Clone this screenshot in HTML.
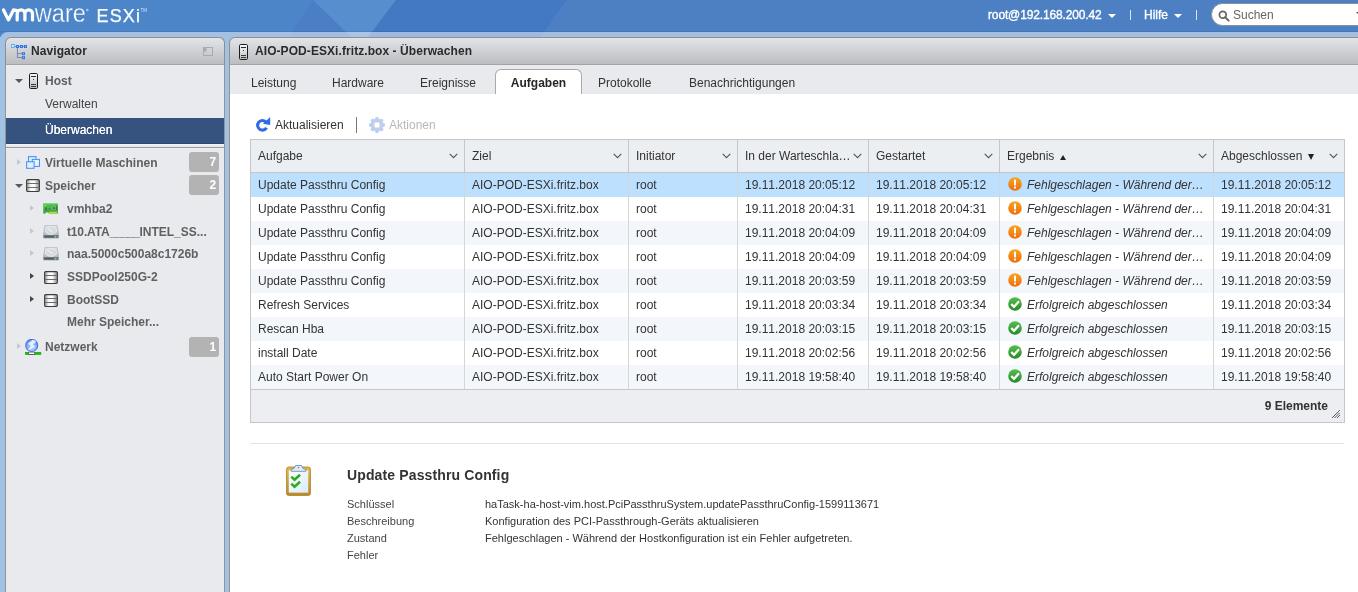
<!DOCTYPE html>
<html><head><meta charset="utf-8">
<style>
*{box-sizing:border-box;margin:0;padding:0}
html,body{width:1358px;height:592px;overflow:hidden}
body{font-family:"Liberation Sans",sans-serif;font-size:12px;color:#333;background:#4a81c4;position:relative}
.a{position:absolute;white-space:nowrap}
svg{position:absolute;overflow:visible}
#band{left:0;top:32px;width:1400px;height:20px;background:rgba(255,255,255,0.49);border-top-left-radius:8px}
.hl{color:#fff;font-size:12px;top:8px;line-height:14px;-webkit-text-stroke:0.35px #fff}
.caret{position:absolute;width:0;height:0;border-left:4px solid transparent;border-right:4px solid transparent;border-top:4px solid #fff}
#search{left:1211px;top:3px;width:170px;height:23px;background:#fff;border:1px solid #8a8f99;border-radius:11.5px}
.ph{letter-spacing:0.070px;height:28px;background:linear-gradient(#e3e4e8,#bcbdc1);border:1px solid #8f8f8f;border-bottom-color:#a3a3a3;font-weight:bold;font-size:12px;color:#2b2b2b;line-height:26px}
#navbody{left:5px;top:65px;width:220px;height:540px;background:#e9eaee;border-left:1px solid #939393;border-right:1px solid #939393}
#mainbody{left:229px;top:65px;width:1140px;height:540px;background:#fff;border-left:1px solid #939393}
.nv{font-size:12px;color:#606060;font-weight:bold;line-height:14px}
.nr{font-size:12px;color:#444;line-height:14px}
.badge{position:absolute;left:189px;width:30px;height:20px;background:#b3b3b3;border-radius:3px;color:#fff;font-weight:bold;font-size:12px;text-align:right;padding-right:2.800px;line-height:21px}
.tr{position:absolute;width:0;height:0;border-top:3.5px solid transparent;border-bottom:3.5px solid transparent;border-left:4px solid #c8c8cc}
.tr.dk{border-left-color:#444;border-top-width:3.800px;border-bottom-width:3.800px;border-left-width:4.300px;margin-top:-0.300px}
.td{position:absolute;width:0;height:0;border-left:4px solid transparent;border-right:4px solid transparent;border-top:4.300px solid #585858}
#tabs{left:230px;top:65px;width:1140px;height:29px;background:#e9eaee}
.tab{position:absolute;top:76px;font-size:12px;color:#333;white-space:nowrap;line-height:14px}
#acttab{left:495px;top:69px;width:87px;height:25px;background:#fff;border:1px solid #a9a9a9;border-bottom:none;border-radius:6px 6px 0 0;text-align:center;font-weight:bold;line-height:26px;color:#262626}
#grid{left:250px;top:139px;width:1095px;height:284px;border:1px solid #c6c6c6;background:#fff}
.gh{position:absolute;top:0;height:33px;background:#eceff2;border-right:1px solid #c6c6c6;border-bottom:1px solid #c6c6c6;line-height:33px;padding-left:7px;font-size:12px;color:#333;white-space:nowrap}
.gh svg{right:6px;top:13px}
.up{display:inline-block;width:0;height:0;margin-left:5.5px;border-left:3.5px solid transparent;border-right:3.5px solid transparent;border-bottom:5.5px solid #222}
.dn{display:inline-block;width:0;height:0;margin-left:5.5px;border-left:3.5px solid transparent;border-right:3.5px solid transparent;border-top:6px solid #222}
.c3,.c4,.c6{font-kerning:none}
.row{position:absolute;left:0;width:1093px;height:24px;line-height:24px;font-size:12px;color:#333;white-space:nowrap}
.row.alt{background:#f3f6fb}
.row.sel{background:#bde0ff}
.c{position:absolute;top:0;height:24px;border-right:1px solid #d6d6d6;padding-left:7px;overflow:hidden}
.c0{left:0;width:214px}.c1{left:214px;width:164px}.c2{left:378px;width:109px}.c3{left:487px;width:131px}.c4{left:618px;width:131px}.c5{left:749px;width:214px}.c6{left:963px;width:130px;border-right:none}
.c5 i{position:absolute;left:27px}
.c5 svg{left:8px;top:4px}
#gfoot{left:0;top:249px;width:1093px;height:33px;background:#eceef1;border-top:1px solid #c6c6c6;font-weight:bold;font-size:12px;color:#333;text-align:right;padding-right:16px;line-height:32px}
#divider{left:250px;top:443px;width:1094px;height:1px;background:#e4e4e4}
.dl{left:347px;font-size:11px;color:#444;line-height:13px}
.dv{left:485px;font-size:11px;color:#333;line-height:13px}
</style></head><body>
<div id="wrap" style="position:absolute;left:0;top:0;width:1358px;height:592px;will-change:transform">
<svg width="0" height="0" style="position:absolute">
<defs>
<linearGradient id="gHost" x1="0" y1="0" x2="0" y2="1"><stop offset="0" stop-color="#fafafa"/><stop offset="1" stop-color="#bdbdbd"/></linearGradient>
<linearGradient id="gSil" x1="0" y1="0" x2="1" y2="0"><stop offset="0" stop-color="#8e8e8e"/><stop offset="0.300" stop-color="#f4f4f4"/><stop offset="0.600" stop-color="#ffffff"/><stop offset="1" stop-color="#808080"/></linearGradient>
<linearGradient id="gWarn" x1="0" y1="0" x2="0" y2="1"><stop offset="0" stop-color="#f8a51d"/><stop offset="1" stop-color="#ee6d0e"/></linearGradient>
<linearGradient id="gOk" x1="0" y1="0" x2="0" y2="1"><stop offset="0" stop-color="#57bf4c"/><stop offset="1" stop-color="#278a27"/></linearGradient>
<linearGradient id="gGlobe" x1="0" y1="0" x2="0" y2="1"><stop offset="0" stop-color="#6f95f0"/><stop offset="1" stop-color="#a9cbfb"/></linearGradient>
<linearGradient id="gCard" x1="0" y1="0" x2="0" y2="1"><stop offset="0" stop-color="#52c950"/><stop offset="1" stop-color="#2fa830"/></linearGradient>
<linearGradient id="gHdd" x1="0" y1="0" x2="0" y2="1"><stop offset="0" stop-color="#e2e5e8"/><stop offset="1" stop-color="#b4bbc2"/></linearGradient>
<linearGradient id="gPaper" x1="0" y1="0" x2="1" y2="1"><stop offset="0" stop-color="#ffffff"/><stop offset="1" stop-color="#d7ecfb"/></linearGradient>
<linearGradient id="gBoard" x1="0" y1="0" x2="0" y2="1"><stop offset="0" stop-color="#e3b64a"/><stop offset="1" stop-color="#b98a2c"/></linearGradient>
<symbol id="iHost" viewBox="0 0 9 16"><rect x="0.500" y="0.500" width="8" height="15" rx="1.200" fill="url(#gHost)" stroke="#1d1d1d" stroke-width="1"/><rect x="2" y="3" width="5" height="1" fill="#2c2c2c"/><rect x="4" y="6" width="1" height="1" fill="#444"/><rect x="2" y="11" width="5" height="1" fill="#3a3a3a"/><rect x="2" y="13" width="5" height="1" fill="#3a3a3a"/></symbol>
<symbol id="iStore" viewBox="0 0 14 13"><rect x="0.6" y="0.6" width="12.8" height="11.800" rx="1.2" fill="url(#gSil)" stroke="#3c3c3c" stroke-width="1.050"/><rect x="1" y="4" width="12" height="1" fill="#6c6c6c"/><rect x="1" y="8" width="12" height="1" fill="#6c6c6c"/></symbol>
<symbol id="iVM" viewBox="0 0 14 13"><rect x="2.500" y="0.600" width="7.500" height="6.500" fill="#d6ecff" stroke="#4a8df5"/><rect x="6.300" y="3.400" width="7.200" height="7" fill="#dcefff" stroke="#4a8df5"/><rect x="0.600" y="5.700" width="7.500" height="6.600" fill="#cfe8ff" stroke="#4a8df5"/><path d="M1.500 8h6M1.500 10h6M3.500 7v5M5.500 7v5" stroke="#fff" stroke-width="0.600" opacity="0.700"/><path d="M9 5.500h4M10.500 4.500v5" stroke="#fff" stroke-width="0.700" opacity="0.800"/></symbol>
<symbol id="iCard" viewBox="0 0 15 11"><path d="M0.600 0.200h13.900a0.400 0.400 0 0 1 0.400 0.400v9.900h-9.400v-0.900h-2.700v0.900h-2.600v-9.900a0.400 0.400 0 0 1 0.400-0.400z" fill="url(#gCard)"/><rect x="2.900" y="9.900" width="2.300" height="0.900" fill="#eef3ee"/><rect x="6" y="8.800" width="8" height="1.400" fill="#d9d23c"/><rect x="2.100" y="4.400" width="1.900" height="3.200" fill="#5b6a60"/><rect x="5.600" y="5.200" width="1.700" height="1.300" fill="#5a6470"/><rect x="9.900" y="3.900" width="2.600" height="2.600" fill="#4d5560" stroke="#9fd8a0" stroke-width="0.500"/><rect x="13.400" y="2.600" width="1" height="4.600" fill="#3f5a40"/><rect x="1.800" y="2" width="0.900" height="0.900" fill="#c9f0c4"/><path d="M0.600 0.700h13.800" stroke="#8be487" stroke-width="0.600"/></symbol>
<symbol id="iHdd" viewBox="0 0 16 14"><path d="M2 0.400h12l1.700 9.900h-15.400z" fill="url(#gHdd)" stroke="#a4abb2" stroke-width="0.600"/><ellipse cx="8" cy="5.500" rx="5.600" ry="3.900" fill="#d6dadf" stroke="#eef0f3" stroke-width="0.700"/><path d="M5.200 3.800l3.300 2" stroke="#fff" stroke-width="0.800" stroke-linecap="round" opacity="0.850"/><circle cx="8.800" cy="6" r="0.700" fill="#f4f5f7"/><rect x="0.300" y="10.100" width="15.400" height="3.100" rx="0.600" fill="#737d87"/><rect x="1.500" y="11.200" width="9" height="1" fill="#4a535b"/><rect x="12" y="10.900" width="1.100" height="1.600" fill="#8fe04a"/></symbol>
<symbol id="iNet" viewBox="0 0 17 16"><circle cx="6.700" cy="6.400" r="5.900" fill="url(#gGlobe)" stroke="#3b7be0" stroke-width="1.200"/><path d="M8 1.100L3.400 4.800L6.200 6.800L3.800 10.800L10 7.600L7.600 5.600L11 2.600Z" fill="#fff" stroke="#fff" stroke-width="0.800" stroke-linejoin="round" opacity="0.800"/><path d="M3 9.500a5 5 0 0 0 7.400 1.200a6.500 6.500 0 0 1-7.400-1.200z" fill="#fff" opacity="0.550"/><rect x="0" y="13" width="16.200" height="2.900" fill="#22b814"/><rect x="3.300" y="12.800" width="6.600" height="3.100" fill="#5a5a5a"/><rect x="4" y="13.500" width="5.200" height="1.500" fill="#fff"/></symbol>
<symbol id="iWarn" viewBox="0 0 14 14"><circle cx="7" cy="7" r="6.800" fill="url(#gWarn)"/><rect x="6" y="2.600" width="2" height="6" rx="0.700" fill="#fff"/><rect x="6" y="9.600" width="2" height="2" rx="0.500" fill="#fff"/></symbol>
<symbol id="iOk" viewBox="0 0 14 14"><circle cx="7" cy="7" r="6.800" fill="url(#gOk)"/><path d="M3.300 7l2.700 2.800 5-5.600" fill="none" stroke="#fff" stroke-width="2.200"/></symbol>
<symbol id="iChev" viewBox="0 0 9 6"><path d="M0.700 0.800l3.800 3.900 3.800-3.900" fill="none" stroke="#555" stroke-width="1.100"/></symbol>
</defs></svg>

<svg id="hdr" style="left:0;top:0" width="1358" height="40" viewBox="0 0 1358 40">
 <rect width="1358" height="40" fill="#4d86c8"/>
 <polygon points="313,0 286.750,40 354.250,40" fill="#4a7fc5"/>
 <polygon points="313,0 396,0 366,40 354.250,40" fill="#578ecd"/>
 <polygon points="396,0 567,0 538.250,40 366,40" fill="#4379c3"/>
 <polygon points="567,0 1358,0 1358,40 538.250,40" fill="#4c80c2"/>
</svg>
<div class="a" style="left:0;top:31px;width:1358px;height:1px;background:rgba(0,20,90,0.10)"></div>
<div class="a" id="band"></div>
<div class="a" style="left:0;top:37px;width:1358px;height:560px;background:#a0c2e5"></div>

<!-- logo -->
<svg id="logo" style="left:0;top:0" width="160" height="32">
 <g fill="none" stroke="#fff" stroke-width="3.250" stroke-linecap="round" stroke-linejoin="round">
  <path d="M3.500 10L8.400 19.900L13.500 9.900L17 10.600"/>
  <path d="M17.200 19.900V13.700a3.850 3.850 0 0 1 7.700 0V19.900M24.900 13.700a3.800 3.800 0 0 1 7.600 0V19.900"/>
 </g>
 <text x="34.800" y="21.700" font-family="Liberation Sans" font-size="25" fill="#fff" stroke="#4d86c8" stroke-width="0.300" textLength="51" lengthAdjust="spacingAndGlyphs">ware</text>
 <text x="96.5" y="21.8" font-family="Liberation Sans" font-size="18" fill="#fff" stroke="#fff" stroke-width="0.250" textLength="43.5" lengthAdjust="spacing">ESXi</text>
 <circle cx="87.300" cy="10" r="1.300" fill="#a9c6e8"/>
 <text x="140.5" y="11.5" font-family="Liberation Sans" font-size="4.5" fill="#cfe0f3">TM</text>
</svg>

<div class="a hl" style="left:988px;letter-spacing:-0.14px">root@192.168.200.42</div><span class="caret" style="left:1108px;top:14px"></span>
<div class="a" style="left:1130px;top:10px;width:1px;height:10px;background:#dbe6f3"></div>
<div class="a hl" style="left:1144px">Hilfe</div><span class="caret" style="left:1174px;top:14px"></span>
<div class="a" style="left:1196px;top:10px;width:1px;height:10px;background:#dbe6f3"></div>
<div class="a" id="search"><svg style="left:5.500px;top:5.500px" width="12" height="12" viewBox="0 0 12 12"><circle cx="4.8" cy="4.8" r="3.4" fill="none" stroke="#666" stroke-width="1.7"/><path d="M7.4 7.4l3.2 3.2" stroke="#666" stroke-width="2" stroke-linecap="round"/></svg><span class="a" style="left:21px;top:4px;font-size:12px;color:#666;line-height:14px">Suchen</span></div>
<span class="td" style="left:1356px;top:12px;border-top-color:#444;border-left-width:3px;border-right-width:3px;border-top-width:3px"></span>

<!-- NAV -->
<div class="a ph" style="left:5px;top:37px;width:220px;padding-left:25px;border-radius:6px 6px 0 0">Navigator</div>
<svg style="left:10px;top:43px" width="18" height="17" viewBox="0 0 18 17">
 <path d="M5 3.500h12M7.400 5v9.500M7.400 10.500h5M7.400 14.500h5" stroke="#6a7fb5" stroke-width="0.900" fill="none"/>
 <rect x="1" y="1" width="4" height="4" fill="#5db3f2"/><rect x="2" y="2" width="2" height="2" fill="#d4eeff"/>
 <rect x="6" y="2" width="3" height="3" fill="#2f73e8"/><rect x="7" y="3" width="1" height="1" fill="#a9ccff"/><rect x="10" y="2" width="3" height="3" fill="#2f73e8"/><rect x="11" y="3" width="1" height="1" fill="#a9ccff"/><rect x="14" y="2" width="3" height="3" fill="#2f73e8"/><rect x="15" y="3" width="1" height="1" fill="#a9ccff"/><rect x="12" y="9.2" width="3" height="3" fill="#2f73e8"/><rect x="13" y="10.2" width="1" height="1" fill="#a9ccff"/><rect x="12" y="13.2" width="3" height="3" fill="#2f73e8"/><rect x="13" y="14.2" width="1" height="1" fill="#a9ccff"/>
</svg>
<svg style="left:203px;top:47px" width="10" height="9" viewBox="0 0 10 9"><rect x="0.500" y="0.500" width="9" height="8" fill="none" stroke="#a9aaae"/><rect x="1" y="1" width="2.500" height="3.500" fill="#a9aaae"/></svg>
<div class="a" id="navbody"></div>

<span class="td" style="left:15px;top:79px"></span>
<svg style="left:28.700px;top:73px" width="9" height="16"><use href="#iHost"/></svg>
<div class="a nv" style="left:45px;top:74px">Host</div>
<div class="a nr" style="left:45px;top:97px">Verwalten</div>
<div class="a" style="left:6px;top:118px;width:218px;height:26px;background:#36537f;border-bottom:1px solid #2a4a7a;box-shadow:0 1px 0 #f1f2f5"></div>
<div class="a nr" style="left:45px;top:123px;color:#fff;text-shadow:0 0 0.5px #fff">Überwachen</div>
<div class="a" style="left:6px;top:147px;width:218px;height:1px;background:#9a9a9a;box-shadow:0 1px 0 #eeeff3"></div>

<span class="tr" style="left:17px;top:159px"></span>
<svg style="left:26px;top:156px" width="14" height="13"><use href="#iVM"/></svg>
<div class="a nv" style="left:45px;top:156px">Virtuelle Maschinen</div>
<span class="badge" style="top:152px">7</span>

<span class="td" style="left:15px;top:184px"></span>
<svg style="left:26px;top:179px" width="14" height="13"><use href="#iStore"/></svg>
<div class="a nv" style="left:45px;top:179px">Speicher</div>
<span class="badge" style="top:175px">2</span>

<span class="tr" style="left:30px;top:205px"></span>
<svg style="left:43px;top:203px" width="15" height="11"><use href="#iCard"/></svg>
<div class="a nv" style="left:67px;top:202px">vmhba2</div>

<span class="tr" style="left:30px;top:228px"></span>
<svg style="left:43px;top:225px" width="16" height="14"><use href="#iHdd"/></svg>
<div class="a nv" style="left:67px;top:225px"><span style="letter-spacing:-0.15px">t10.ATA</span><span style="letter-spacing:-0.7px">_____</span>INTEL_SS...</div>

<span class="tr" style="left:30px;top:250px"></span>
<svg style="left:43px;top:247px" width="16" height="14"><use href="#iHdd"/></svg>
<div class="a nv" style="left:67px;top:247px">naa.5000c500a8c1726b</div>

<span class="tr dk" style="left:30px;top:273px"></span>
<svg style="left:44px;top:271px" width="14" height="13"><use href="#iStore"/></svg>
<div class="a nv" style="left:67px;top:270px">SSDPool250G-2</div>

<span class="tr dk" style="left:30px;top:296px"></span>
<svg style="left:44px;top:294px" width="14" height="13"><use href="#iStore"/></svg>
<div class="a nv" style="left:67px;top:293px">BootSSD</div>

<div class="a nv" style="left:67px;top:315px">Mehr Speicher...</div>

<span class="tr" style="left:17px;top:343px"></span>
<svg style="left:25px;top:339px" width="17" height="16"><use href="#iNet"/></svg>
<div class="a nv" style="left:45px;top:340px">Netzwerk</div>
<span class="badge" style="top:337px">1</span>

<!-- MAIN -->
<div class="a ph" style="left:229px;top:37px;width:1140px;padding-left:25px;border-radius:6px 0 0 0">AIO-POD-ESXi.fritz.box - Überwachen</div>
<svg style="left:239px;top:44px" width="9" height="16"><use href="#iHost"/></svg>
<div class="a" id="mainbody"></div>
<div class="a" id="tabs"></div>
<div class="tab" style="left:251px">Leistung</div>
<div class="tab" style="left:332px">Hardware</div>
<div class="tab" style="left:420px">Ereignisse</div>
<div class="a" id="acttab">Aufgaben</div>
<div class="tab" style="left:598px">Protokolle</div>
<div class="tab" style="left:689px">Benachrichtigungen</div>

<svg style="left:256px;top:117px" width="15" height="15" viewBox="0 0 15 15"><path d="M9.800 4.900A4.800 4.800 0 1 0 10.560 10.700" fill="none" stroke="#2f6ce6" stroke-width="3.100"/><path d="M14.200 0l0 8-7.200-1.200z" fill="#2f6ce6"/></svg>
<div class="a" style="left:275px;top:118px;font-size:12px;color:#333;line-height:14px">Aktualisieren</div>
<div class="a" style="left:356px;top:117px;width:1px;height:16px;background:#777"></div>
<svg style="left:369px;top:117px" width="16" height="16" viewBox="-8 -8 16 16">
 <g fill="#bccff2"><circle r="6.200"/><path d="M-2.200 -5.500l0.900 -2.500h2.600l0.900 2.500z" transform="rotate(0)"/><path d="M-2.200 -5.500l0.900 -2.500h2.600l0.900 2.500z" transform="rotate(45)"/><path d="M-2.200 -5.500l0.900 -2.500h2.600l0.900 2.500z" transform="rotate(90)"/><path d="M-2.200 -5.500l0.900 -2.500h2.600l0.900 2.500z" transform="rotate(135)"/><path d="M-2.200 -5.500l0.900 -2.500h2.600l0.900 2.500z" transform="rotate(180)"/><path d="M-2.200 -5.500l0.900 -2.500h2.600l0.900 2.500z" transform="rotate(225)"/><path d="M-2.200 -5.500l0.900 -2.500h2.600l0.900 2.500z" transform="rotate(270)"/><path d="M-2.200 -5.500l0.900 -2.500h2.600l0.900 2.500z" transform="rotate(315)"/></g>
 <rect x="-3" y="-3" width="6" height="6" rx="1.800" fill="#fff" stroke="#cdd1da" stroke-width="1"/>
</svg>
<div class="a" style="left:389px;top:118px;font-size:12px;color:#b8b8b8;line-height:14px">Aktionen</div>

<div class="a" id="grid">
 <div class="gh" style="left:0;width:214px">Aufgabe<svg width="9" height="6"><use href="#iChev"/></svg></div>
 <div class="gh" style="left:214px;width:164px">Ziel<svg width="9" height="6"><use href="#iChev"/></svg></div>
 <div class="gh" style="left:378px;width:109px">Initiator<svg width="9" height="6"><use href="#iChev"/></svg></div>
 <div class="gh" style="left:487px;width:131px">In der Warteschla…<svg width="9" height="6"><use href="#iChev"/></svg></div>
 <div class="gh" style="left:618px;width:131px">Gestartet<svg width="9" height="6"><use href="#iChev"/></svg></div>
 <div class="gh" style="left:749px;width:214px">Ergebnis<span class="up"></span><svg width="9" height="6"><use href="#iChev"/></svg></div>
 <div class="gh" style="left:963px;width:130px;border-right:none">Abgeschlossen<span class="dn"></span><svg width="9" height="6"><use href="#iChev"/></svg></div>
<div class="row sel" style="top:33px"><div class="c c0">Update Passthru Config</div><div class="c c1">AIO-POD-ESXi.fritz.box</div><div class="c c2">root</div><div class="c c3">19.11.2018 20:05:12</div><div class="c c4">19.11.2018 20:05:12</div><div class="c c5"><svg width="14" height="14"><use href="#iWarn"/></svg><i>Fehlgeschlagen - Während der…</i></div><div class="c c6">19.11.2018 20:05:12</div></div>
<div class="row" style="top:57px"><div class="c c0">Update Passthru Config</div><div class="c c1">AIO-POD-ESXi.fritz.box</div><div class="c c2">root</div><div class="c c3">19.11.2018 20:04:31</div><div class="c c4">19.11.2018 20:04:31</div><div class="c c5"><svg width="14" height="14"><use href="#iWarn"/></svg><i>Fehlgeschlagen - Während der…</i></div><div class="c c6">19.11.2018 20:04:31</div></div>
<div class="row alt" style="top:81px"><div class="c c0">Update Passthru Config</div><div class="c c1">AIO-POD-ESXi.fritz.box</div><div class="c c2">root</div><div class="c c3">19.11.2018 20:04:09</div><div class="c c4">19.11.2018 20:04:09</div><div class="c c5"><svg width="14" height="14"><use href="#iWarn"/></svg><i>Fehlgeschlagen - Während der…</i></div><div class="c c6">19.11.2018 20:04:09</div></div>
<div class="row" style="top:105px"><div class="c c0">Update Passthru Config</div><div class="c c1">AIO-POD-ESXi.fritz.box</div><div class="c c2">root</div><div class="c c3">19.11.2018 20:04:09</div><div class="c c4">19.11.2018 20:04:09</div><div class="c c5"><svg width="14" height="14"><use href="#iWarn"/></svg><i>Fehlgeschlagen - Während der…</i></div><div class="c c6">19.11.2018 20:04:09</div></div>
<div class="row alt" style="top:129px"><div class="c c0">Update Passthru Config</div><div class="c c1">AIO-POD-ESXi.fritz.box</div><div class="c c2">root</div><div class="c c3">19.11.2018 20:03:59</div><div class="c c4">19.11.2018 20:03:59</div><div class="c c5"><svg width="14" height="14"><use href="#iWarn"/></svg><i>Fehlgeschlagen - Während der…</i></div><div class="c c6">19.11.2018 20:03:59</div></div>
<div class="row" style="top:153px"><div class="c c0">Refresh Services</div><div class="c c1">AIO-POD-ESXi.fritz.box</div><div class="c c2">root</div><div class="c c3">19.11.2018 20:03:34</div><div class="c c4">19.11.2018 20:03:34</div><div class="c c5"><svg width="14" height="14"><use href="#iOk"/></svg><i>Erfolgreich abgeschlossen</i></div><div class="c c6">19.11.2018 20:03:34</div></div>
<div class="row alt" style="top:177px"><div class="c c0">Rescan Hba</div><div class="c c1">AIO-POD-ESXi.fritz.box</div><div class="c c2">root</div><div class="c c3">19.11.2018 20:03:15</div><div class="c c4">19.11.2018 20:03:15</div><div class="c c5"><svg width="14" height="14"><use href="#iOk"/></svg><i>Erfolgreich abgeschlossen</i></div><div class="c c6">19.11.2018 20:03:15</div></div>
<div class="row" style="top:201px"><div class="c c0">install Date</div><div class="c c1">AIO-POD-ESXi.fritz.box</div><div class="c c2">root</div><div class="c c3">19.11.2018 20:02:56</div><div class="c c4">19.11.2018 20:02:56</div><div class="c c5"><svg width="14" height="14"><use href="#iOk"/></svg><i>Erfolgreich abgeschlossen</i></div><div class="c c6">19.11.2018 20:02:56</div></div>
<div class="row alt" style="top:225px"><div class="c c0">Auto Start Power On</div><div class="c c1">AIO-POD-ESXi.fritz.box</div><div class="c c2">root</div><div class="c c3">19.11.2018 19:58:40</div><div class="c c4">19.11.2018 19:58:40</div><div class="c c5"><svg width="14" height="14"><use href="#iOk"/></svg><i>Erfolgreich abgeschlossen</i></div><div class="c c6">19.11.2018 19:58:40</div></div>
 <div class="a" id="gfoot">9 Elemente</div>
 <svg style="left:1081px;top:270px" width="8" height="8" viewBox="0 0 8 8"><path d="M0 8l8-8M2.500 8l5.500-5.500M5 8l3-3" stroke="#222" stroke-width="1" stroke-dasharray="1 0.500"/></svg>
</div>

<div class="a" id="divider"></div>
<svg style="left:286px;top:465px" width="25" height="31" viewBox="0 0 25 31">
 <rect x="0.500" y="2" width="24" height="28.500" rx="2.200" fill="url(#gBoard)" stroke="#b08428" stroke-width="0.800"/>
 <rect x="3" y="5.500" width="19" height="21.800" fill="url(#gPaper)" stroke="#e9eef3" stroke-width="0.500"/>
 <path d="M5.200 6.300v-1.800l3-1.200 1.300-2.800h6l1.300 2.800 3 1.200v1.800z" fill="#e2ebf7" stroke="#5d83b8" stroke-width="0.800"/>
 <circle cx="12.500" cy="2.600" r="0.800" fill="#6a8ab8"/>
 <path d="M5.300 11.700l3.200 3 5.600-5" fill="none" stroke="#2eaa22" stroke-width="2.500"/>
 <path d="M5.300 18.700l3.200 3 5.600-5" fill="none" stroke="#2eaa22" stroke-width="2.500"/>
</svg>
<div class="a" style="left:347px;top:467px;font-size:14px;font-weight:bold;color:#333;line-height:16px;letter-spacing:0.13px">Update Passthru Config</div>
<div class="a dl" style="top:498px">Schlüssel</div><div class="a dv" style="top:498px">haTask-ha-host-vim.host.PciPassthruSystem.updatePassthruConfig-1599113671</div>
<div class="a dl" style="top:515px">Beschreibung</div><div class="a dv" style="top:515px">Konfiguration des PCI-Passthrough-Geräts aktualisieren</div>
<div class="a dl" style="top:532px">Zustand</div><div class="a dv" style="top:532px">Fehlgeschlagen - Während der Hostkonfiguration ist ein Fehler aufgetreten.</div>
<div class="a dl" style="top:549px">Fehler</div>

</div>
</body></html>
